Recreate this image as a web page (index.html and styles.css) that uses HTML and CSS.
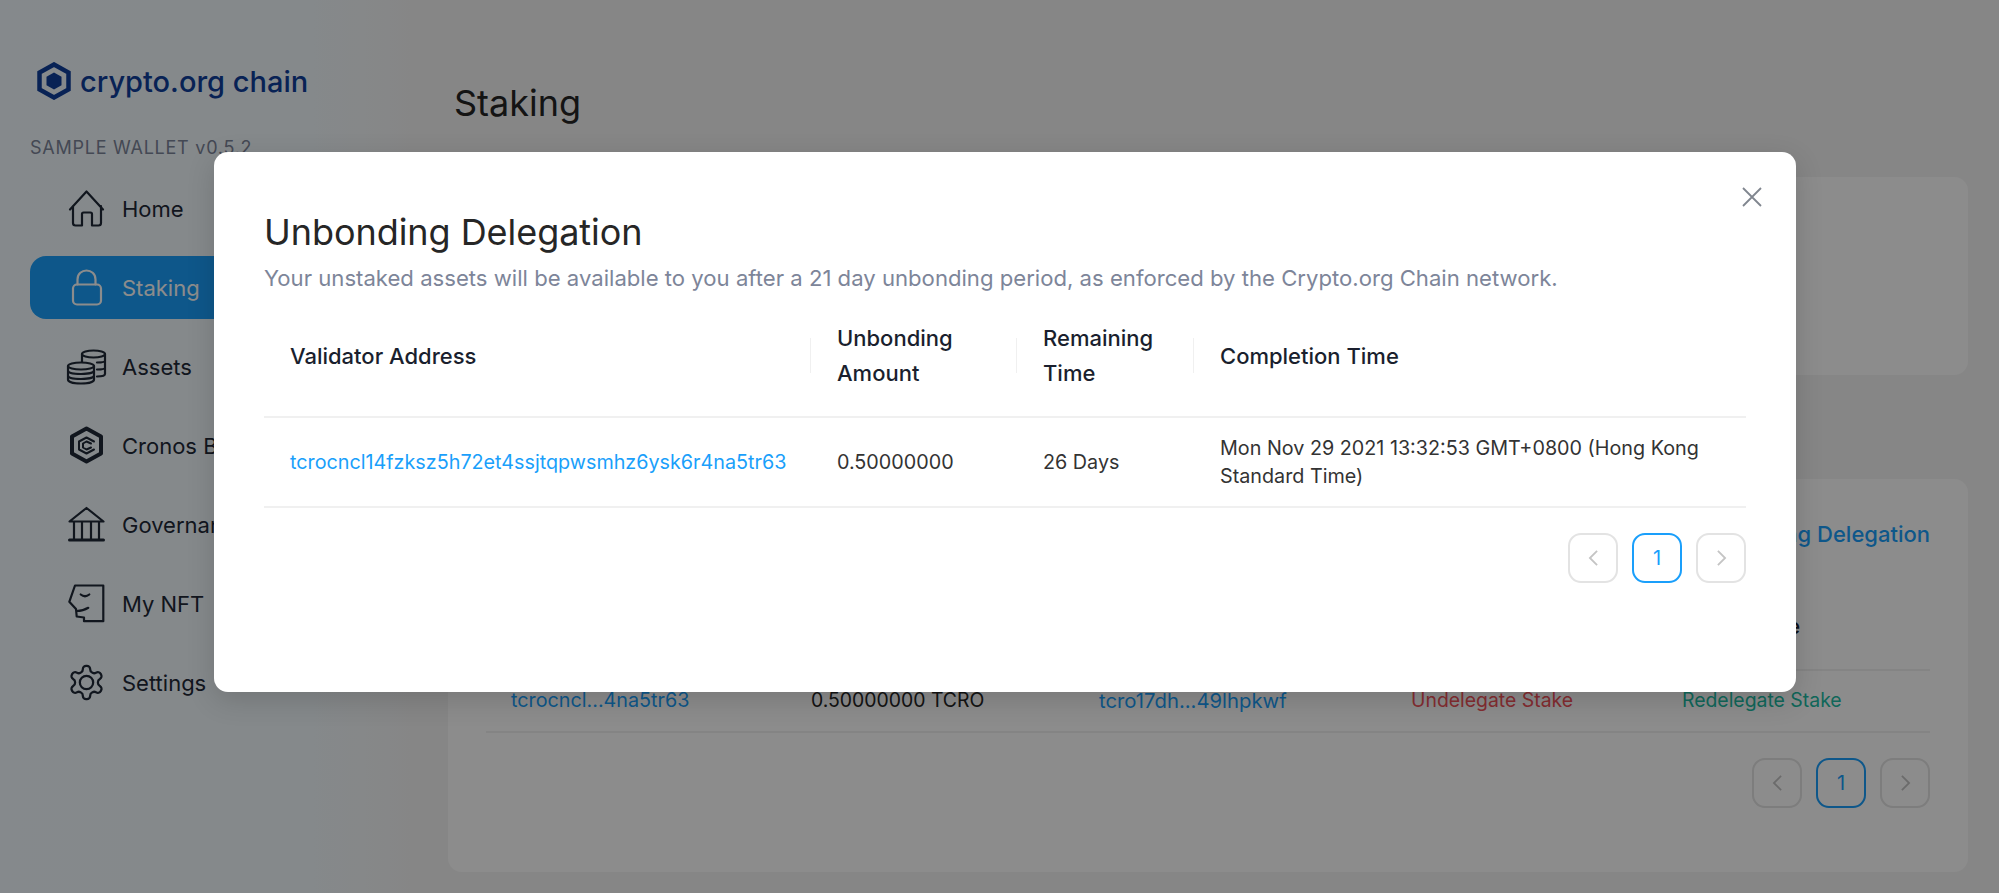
FILE: index.html
```html
<!DOCTYPE html>
<html>
<head>
    <meta charset="utf-8">
    <meta name="viewport" content="width=device-width, initial-scale=1">
    <title>Staking</title>
    <link rel="stylesheet" href="styles.css">
</head>
<body>
    <div class="page">
        <aside class="sidebar">
            <div class="logo">
                <svg class="logo-mark" viewBox="0 0 34 38" width="34" height="38">
                    <path d="M17 2.500 L31.500 10.500 V27.500 L17 35.500 L2.500 27.500 V10.500 Z" fill="none" stroke="#0f3f9c" stroke-width="4.500"/>
                    <path d="M17 10.500 L24.500 14.800 V23.200 L17 27.500 L9.500 23.200 V14.800 Z" fill="#0f3f9c"/>
                </svg>
                <span class="logo-text">crypto.org chain</span>
            </div>
            <div class="version">SAMPLE WALLET v0.5.2</div>
            <nav class="menu">
                <a class="menu-item">
                    <svg class="menu-icon" viewBox="0 0 35 37"><path d="M1 19.500 L17.500 1.500 L34 19.500 M4 16 V33 Q4 35.500 6.500 35.500 H13 V24 Q13 22.500 14.500 22.500 H21.500 Q23 22.500 23 24 V35.500 H29.500 Q32 35.500 32 33 V16"/></svg>
                    <span>Home</span>
                </a>
                <a class="menu-item active">
                    <svg class="menu-icon" viewBox="0 0 35 37"><rect x="4" y="15.500" width="28" height="20" rx="4"/><path d="M8.500 15.500 V10.500 C8.500 -1.500 26.500 -1.500 26.500 10.500 V15.500"/></svg>
                    <span>Staking</span>
                </a>
                <a class="menu-item">
                    <svg class="menu-icon" viewBox="0 0 35 37"><ellipse cx="24.500" cy="6" rx="11.500" ry="3.500"/><path d="M13 6 V14 M36 6 V26 C36 27.500 33 28.500 28 28.500 M28 14.500 C33 14.500 36 14 36 12.500 M28 21.500 C33 21.500 36 21 36 19.500"/><ellipse cx="12" cy="18" rx="13" ry="3.500"/><path d="M-1 18 V31.500 C-1 34 5 35.500 12 35.500 C19 35.500 25 34 25 31.500 V18 M-1 22.500 C-1 25 5 26 12 26 C19 26 25 25 25 22.500 M-1 27.500 C-1 30 5 31 12 31 C19 31 25 30 25 27.500"/></svg>
                    <span>Assets</span>
                </a>
                <a class="menu-item">
                    <svg class="menu-icon cronos" viewBox="0 0 35 37"><path d="M17.500 1.500 L32 9.500 V26.500 L17.500 34.500 L3 26.500 V9.500 Z"/><path class="thin" d="M25 14.500 L17.500 10.500 L10 14.500 V22.500 L17.500 26.500 L25 22.500 M22 16.500 L17.500 14.500 L14 16.500 V20.500 L17.500 22.500 L22 20.500"/></svg>
                    <span>Cronos Bridge</span>
                </a>
                <a class="menu-item">
                    <svg class="menu-icon" viewBox="0 0 35 37"><path d="M0.500 15.500 L17.500 2 L34.500 15.500 Z M5 15.500 V33 M13 15.500 V33 M22 15.500 V33 M30 15.500 V33"/><path class="base" d="M0.500 34 H34.500"/></svg>
                    <span>Governance</span>
                </a>
                <a class="menu-item">
                    <svg class="menu-icon" viewBox="0 0 35 37"><path d="M6 0.500 H34.300 V36.200 H15 V32.500 L7.700 31.500 L7 24 L0.300 16.800 Z M11.700 9.500 Q16 13 20.300 9.500 M7.700 26 Q14 26 19.300 22.800"/></svg>
                    <span>My NFT</span>
                </a>
                <a class="menu-item">
                    <svg class="menu-icon gear" viewBox="1.500 1.500 21 21"><path d="M12.220 2h-.44a2 2 0 0 0-2 2v.18a2 2 0 0 1-1 1.730l-.43.25a2 2 0 0 1-2 0l-.15-.08a2 2 0 0 0-2.730.73l-.22.38a2 2 0 0 0 .73 2.730l.15.1a2 2 0 0 1 1 1.720v.51a2 2 0 0 1-1 1.740l-.15.09a2 2 0 0 0-.73 2.730l.22.38a2 2 0 0 0 2.730.73l.15-.08a2 2 0 0 1 2 0l.43.25a2 2 0 0 1 1 1.730V20a2 2 0 0 0 2 2h.44a2 2 0 0 0 2-2v-.18a2 2 0 0 1 1-1.730l.43-.25a2 2 0 0 1 2 0l.15.08a2 2 0 0 0 2.730-.73l.22-.39a2 2 0 0 0-.73-2.730l-.15-.08a2 2 0 0 1-1-1.740v-.5a2 2 0 0 1 1-1.740l.15-.09a2 2 0 0 0 .73-2.730l-.22-.38a2 2 0 0 0-2.730-.73l-.15.08a2 2 0 0 1-2 0l-.43-.25a2 2 0 0 1-1-1.730V4a2 2 0 0 0-2-2z"/><circle cx="12" cy="12" r="4"/></svg>
                    <span>Settings</span>
                </a>
            </nav>
        </aside>

        <main class="content">
            <h1 class="page-title">Staking</h1>
            <section class="card summary-card"></section>
            <section class="card list-card">
                <div class="tabs"><a>Unbonding Delegation</a></div>
                <div class="list-row list-head">
                    <span>Validator Address</span>
                    <span>Amount</span>
                    <span>Validator</span>
                    <span>Undelegate</span>
                    <span>Redelegate</span>
                </div>
                <div class="list-row">
                    <a class="link">tcrocncl...4na5tr63</a>
                    <span class="amount">0.50000000 TCRO</span>
                    <a class="link wide">tcro17dh...49lhpkwf</a>
                    <a class="danger">Undelegate Stake</a>
                    <a class="success">Redelegate Stake</a>
                </div>
                <div class="pager">
                    <button class="page-btn">
                        <svg viewBox="0 0 12 20" width="11" height="18"><path d="M10 2 L2 10 L10 18"/></svg>
                    </button>
                    <button class="page-btn current">1</button>
                    <button class="page-btn">
                        <svg viewBox="0 0 12 20" width="11" height="18"><path d="M2 2 L10 10 L2 18"/></svg>
                    </button>
                </div>
            </section>
        </main>
    </div>

    <div class="overlay"></div>

    <div class="modal">
        <button class="modal-close">
            <svg viewBox="0 0 20 20" width="20" height="20"><path d="M1 1 L19 19 M19 1 L1 19"/></svg>
        </button>
        <h2 class="modal-title">Unbonding Delegation</h2>
        <p class="modal-desc">Your unstaked assets will be available to you after a 21 day unbonding period, as enforced by the Crypto.org Chain network.</p>
        <table class="modal-table">
            <colgroup>
                <col class="col-address">
                <col class="col-amount">
                <col class="col-remaining">
                <col class="col-time">
            </colgroup>
            <thead>
                <tr>
                    <th>Validator Address</th>
                    <th>Unbonding Amount</th>
                    <th>Remaining Time</th>
                    <th>Completion Time</th>
                </tr>
            </thead>
            <tbody>
                <tr>
                    <td><a class="link">tcrocncl14fzksz5h72et4ssjtqpwsmhz6ysk6r4na5tr63</a></td>
                    <td>0.50000000</td>
                    <td>26 Days</td>
                    <td>Mon Nov 29 2021 13:32:53 GMT+0800 (Hong Kong Standard Time)</td>
                </tr>
            </tbody>
        </table>
        <div class="modal-pager">
            <button class="page-btn">
                <svg viewBox="0 0 12 20" width="11" height="18"><path d="M10 2 L2 10 L10 18"/></svg>
            </button>
            <button class="page-btn current">1</button>
            <button class="page-btn">
                <svg viewBox="0 0 12 20" width="11" height="18"><path d="M2 2 L10 10 L2 18"/></svg>
            </button>
        </div>
    </div>
</body>
</html>
```

FILE: styles.css
```css
* {
    box-sizing: border-box;
}

html, body {
    margin: 0;
    padding: 0;
    background-color: #fff;
    overflow: hidden;
}

body {
    width: 1999px;
    height: 894px;
    position: relative;
    font-family: Inter, "Liberation Sans", sans-serif;
    color: #262626;
}

.page {
    display: flex;
    height: 893px;
    background-color: #f5f5f5;
}

/* sidebar */
.sidebar {
    width: 448px;
    flex-shrink: 0;
    padding: 62px 0 0 30px;
    background: linear-gradient(90deg, #f2faff 0%, #f3f9fd 70%, #f5f5f5 92%);
}

.logo {
    display: flex;
    align-items: center;
    gap: 9px;
    padding-left: 7px;
    height: 38px;
}

.logo-text {
    font-size: 29px;
    font-weight: 500;
    color: #0f3f9c;
}

.version {
    margin-top: 36px;
    font-size: 18px;
    line-height: 24px;
    letter-spacing: 0.75px;
    color: #7d8599;
}

.menu {
    margin-top: 17px;
    width: 500px;
}

.menu-item {
    display: flex;
    align-items: center;
    gap: 18px;
    height: 63px;
    margin-bottom: 16px;
    padding-left: 39px;
    border-radius: 16px;
    font-size: 22px;
    color: #1f2937;
}

.menu-item.active {
    background-color: #1a9ffb;
    color: #fff;
}

.menu-item.active .menu-icon {
    stroke: #fff;
}

.menu-icon {
    width: 35px;
    height: 37px;
    overflow: visible;
    fill: none;
    stroke: #1f2937;
    stroke-width: 2.2;
    stroke-linejoin: round;
    stroke-linecap: round;
}

.menu-icon .base {
    stroke-width: 3;
}

.cronos {
    stroke-width: 4;
}

.cronos .thin {
    stroke-width: 2;
}

.gear {
    stroke-width: 1.35;
}

/* main content behind the dialog */
.content {
    flex: 1;
    padding: 0 31px 0 0;
}

.page-title {
    margin: 80px 0 0 6px;
    font-size: 36px;
    line-height: 46px;
    font-weight: 400;
}

.card {
    background-color: #fff;
    border-radius: 14px;
}

.summary-card {
    margin-top: 51px;
    height: 198px;
}

.list-card {
    margin-top: 104px;
    height: 393px;
    padding: 40px 38px 0;
}

.tabs {
    text-align: right;
    font-size: 22px;
    font-weight: 500;
    line-height: 30px;
    color: #1a9ffb;
}

.list-row {
    display: grid;
    grid-template-columns: 300px 288px 312px 271px 1fr;
    align-items: center;
    padding-left: 25px;
    padding-bottom: 2px;
    height: 62px;
    font-size: 19.750px;
    border-bottom: 2px solid #f0f0f0;
}

.list-head {
    height: 122px;
    padding-top: 34px;
    padding-bottom: 0;
    font-size: 22px;
    font-weight: 500;
    color: #1a1f2e;
}

.link {
    color: #1a9ffb;
}

.amount {
    font-size: 19.400px;
}

.wide {
    font-size: 20.300px;
}

.danger {
    font-size: 19.400px;
    color: #f0525a;
}

.success {
    font-size: 19.400px;
    color: #20bca4;
}

.pager {
    display: flex;
    justify-content: flex-end;
    gap: 14px;
    margin-top: 25px;
}

.page-btn {
    display: flex;
    align-items: center;
    justify-content: center;
    width: 50px;
    height: 50px;
    padding: 0;
    background-color: #fff;
    border: 2px solid #e3e3e3;
    border-radius: 13px;
    font-family: inherit;
    font-size: 20px;
    color: #1a9ffb;
}

.page-btn svg {
    fill: none;
    stroke: #c4c4c4;
    stroke-width: 2;
}

.page-btn.current {
    border-color: #1a9ffb;
}

/* dialog */
.overlay {
    position: absolute;
    left: 0;
    top: 0;
    width: 100%;
    height: 893px;
    background-color: rgba(0, 0, 0, 0.45);
}

.modal {
    position: absolute;
    left: 214px;
    top: 152px;
    width: 1582px;
    height: 540px;
    padding: 59px 50px 0;
    background-color: #fff;
    border-radius: 14px;
    box-shadow: 0 8px 28px rgba(0, 0, 0, 0.15);
}

.modal-close {
    position: absolute;
    right: 34px;
    top: 35px;
    padding: 0;
    border: none;
    background: none;
    line-height: 0;
}

.modal-close svg {
    fill: none;
    stroke: #80868f;
    stroke-width: 1.8;
}

.modal-title {
    margin: 0;
    font-size: 36px;
    line-height: 42px;
    font-weight: 400;
    letter-spacing: -0.05px;
    color: #262626;
}

.modal-desc {
    margin: 11px 0 0;
    font-size: 22.130px;
    line-height: 28px;
    color: #7d8599;
}

.modal-table {
    margin-top: 5px;
    width: 100%;
    table-layout: fixed;
    border-collapse: collapse;
}

.col-address {
    width: 547px;
}

.col-amount {
    width: 206px;
}

.col-remaining {
    width: 177px;
}

.modal-table th {
    position: relative;
    padding: 24px 25px 25px 26px;
    text-align: left;
    font-size: 22px;
    line-height: 35px;
    font-weight: 500;
    color: #1a1f2e;
    border-bottom: 2px solid #f0f0f0;
}

.modal-table th:not(:last-child)::after {
    content: "";
    position: absolute;
    right: 0;
    top: 41px;
    width: 1px;
    height: 35px;
    background-color: #f0f0f0;
}

.modal-table td {
    height: 90px;
    padding: 0 25px 0 26px;
    font-size: 19.750px;
    line-height: 28px;
    color: #333;
    border-bottom: 2px solid #f0f0f0;
}

.modal-table td:first-child {
    padding-right: 0;
}

.modal-pager {
    display: flex;
    justify-content: flex-end;
    gap: 14px;
    margin-top: 25px;
}
```
